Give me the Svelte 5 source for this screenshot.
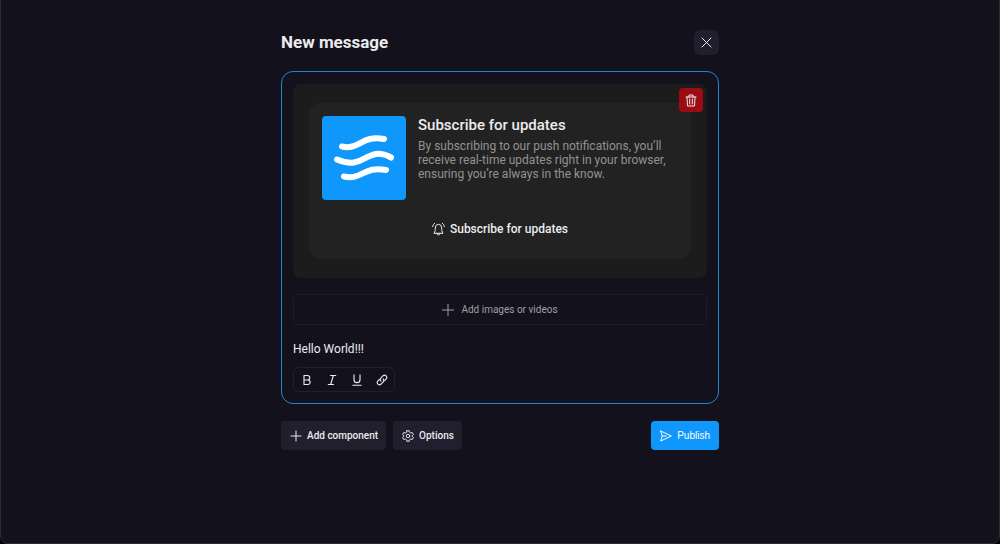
<script>
  let message = $state('Hello World!!!');
  let showSubscribe = $state(true);

  const formats = [
    { name: 'Bold', path: 'M4 8h5.2a3 3 0 0 1 0 6H4V2h4.6a3 3 0 0 1 0 6' },
    { name: 'Italic', path: 'M6 2h7M3 14h7M9.8 2 6.2 14' },
    { name: 'Underline', path: 'M4 1v6.500a4 4 0 0 0 8 0V1M2.5 15h11' },
    {
      name: 'Link',
      path: 'M6.6 9.4a3 3 0 0 1 0-4.2l2.9-2.9a3 3 0 0 1 4.2 4.2l-2 2M9.4 6.6a3 3 0 0 1 0 4.2l-2.9 2.9a3 3 0 0 1-4.2-4.2l2-2'
    }
  ];
</script>

<div class="window">
  <main>
    <header>
      <h1>New message</h1>
      <button class="close" aria-label="Close">
        <svg width="11" height="11" viewBox="0 0 11 11"><path d="M1 1l9 9M10 1l-9 9" /></svg>
      </button>
    </header>

    <section class="composer">
      {#if showSubscribe}
        <div class="preview">
          <article class="card">
            <div class="info">
              <svg class="logo" width="84" height="84" viewBox="0 0 84 84">
                <path d="M20 30.500c17 4 20-12 42-7.500M15 43.500c28 12 29-15 54-2M22 60.500c18 4 20-11 42-6.500" />
              </svg>
              <div>
                <h2>Subscribe for updates</h2>
                <p>
                  By subscribing to our push notifications, you’ll receive real-time updates right in your
                  browser, ensuring you’re always in the know.
                </p>
              </div>
            </div>
            <button class="subscribe">
              <svg width="13" height="14" viewBox="0 0 13 14">
                <path d="M2.200 11c1-1.400 1.100-3 1.100-5a3.200 3.700 0 0 1 6.400 0c0 2 .1 3.600 1.100 5zM5 11.200a1.500 1.800 0 0 0 3 0M2.700 1.300C1.500 2 .8 3.200.7 4.600M10.300 1.300c1.200.7 1.900 1.900 2 3.300" />
              </svg>
              Subscribe for updates
            </button>
          </article>
          <button class="delete" aria-label="Delete component" onclick={() => (showSubscribe = false)}>
            <svg width="12" height="13" viewBox="0 0 12 13">
              <path d="M1 3h10M4 3V1h4v2M2 3l.5 9h7l.5-9M4.700 5v5M7.300 5v5" />
            </svg>
          </button>
        </div>
      {/if}

      <button class="add-media">
        <svg width="12" height="12" viewBox="0 0 12 12"><path d="M6 0v12M0 6h12" /></svg>
        Add images or videos
      </button>

      <textarea rows="1" aria-label="Message" bind:value={message}></textarea>

      <div class="toolbar">
        {#each formats as format (format.name)}
          <button aria-label={format.name}>
            <svg width="12" height="12" viewBox="0 0 16 16"><path d={format.path} /></svg>
          </button>
        {/each}
      </div>
    </section>

    <footer>
      <button>
        <svg width="12" height="12" viewBox="0 0 12 12"><path d="M6 1v10M1 6h10" /></svg>
        Add component
      </button>
      <button>
        <svg width="12" height="12" viewBox="0 0 24 24" class="gear">
          <path d="M9.700 1.500h4.600l.8 3.200 2.200 1.300 3.200-.9 2.300 4-2.400 2.300v1.200l2.400 2.300-2.300 4-3.200-.9-2.200 1.300-.8 3.200H9.700l-.8-3.200L6.700 18l-3.200.9-2.300-4 2.400-2.300v-1.200L1.200 9.100l2.300-4 3.200.9 2.200-1.300z" />
          <circle cx="12" cy="12" r="3.500" />
        </svg>
        Options
      </button>
      <button class="publish">
        <svg width="12" height="12" viewBox="0 0 12 12">
          <path d="M.7 1 11.300 6 .7 11l1.500-5zM2.200 6h4" />
        </svg>
        Publish
      </button>
    </footer>
  </main>
</div>

<style>
  :global(body) {
    margin: 0;
    background: #000;
  }

  .window {
    box-sizing: border-box;
    min-height: 100vh;
    padding: 29px 16px;
    border: 1px solid #2b2a33;
    border-top-color: #13111b;
    border-radius: 0 0 8px 8px;
    background: #13111b;
    color: #ececef;
    font-family: Roboto, sans-serif;
  }

  main {
    max-width: 438px;
    margin: 0 auto;
  }

  header {
    display: flex;
    align-items: center;
    justify-content: space-between;
    margin-bottom: 16px;
  }

  h1,
  h2,
  p {
    margin: 0;
  }

  h1 {
    font-size: 17px;
    line-height: 25px;
    font-weight: 700;
  }

  button {
    display: flex;
    align-items: center;
    justify-content: center;
    padding: 0;
    border: 0;
    border-radius: 4px;
    background: #211f2d;
    color: inherit;
    font: 500 10px/15px Roboto, sans-serif;
    cursor: pointer;
  }

  svg {
    flex: none;
    fill: none;
    stroke: currentColor;
    stroke-width: 1;
    stroke-linecap: round;
    stroke-linejoin: round;
  }

  .close {
    width: 25px;
    height: 25px;
    border-radius: 6px;
  }

  .composer {
    padding: 12px 11px 11px;
    border: 1px solid #2586ce;
    border-radius: 12px;
  }

  .preview {
    position: relative;
    margin-bottom: 16px;
    padding: 19px 16px;
    border-radius: 8px;
    background: #1b1c1b;
  }

  .card {
    padding: 13px 13px 14px;
    border-radius: 12px;
    background: #222;
  }

  .info {
    display: flex;
    gap: 12px;
    margin-bottom: 13px;
  }

  .logo {
    border-radius: 4px;
    background: #1097fc;
    color: #fff;
    stroke-width: 6;
  }

  h2 {
    font-size: 15px;
    line-height: 18px;
    font-weight: 500;
    margin-bottom: 5px;
  }

  p {
    color: #929292;
    font-size: 12px;
    line-height: 14px;
  }

  .subscribe {
    gap: 5px;
    width: 100%;
    height: 32px;
    background: #222;
    font-size: 12px;
  }

  .delete {
    position: absolute;
    top: 4px;
    right: 4px;
    width: 24px;
    height: 24px;
    background: #9d0c12;
  }

  .add-media {
    gap: 7px;
    width: 100%;
    height: 31px;
    border: 1px solid #1d1b26;
    background: none;
    color: #a09fa6;
    font-weight: 400;
  }

  textarea {
    display: block;
    box-sizing: border-box;
    width: 100%;
    height: 18px;
    margin: 15px 0 9px;
    padding: 0;
    border: 0;
    outline: 0;
    background: none;
    color: inherit;
    font: 12px/18px Roboto, sans-serif;
    resize: none;
    overflow: hidden;
  }

  .toolbar {
    display: flex;
    width: fit-content;
    border: 1px solid #211f2a;
    border-radius: 6px;
  }

  .toolbar button {
    width: 25px;
    height: 23px;
    background: none;
  }

  .toolbar svg {
    stroke-width: 1.5;
  }

  footer {
    display: flex;
    gap: 7px;
    margin-top: 17px;
  }

  footer button {
    gap: 5px;
    height: 29px;
    padding: 0 8px 0 9px;
  }

  .gear {
    stroke-width: 2;
  }

  .publish {
    margin-left: auto;
    padding: 0 9px;
    background: #1097fc;
    color: #fff;
    font-family: "Liberation Sans", Arial, sans-serif;
    font-weight: 400;
  }
</style>
